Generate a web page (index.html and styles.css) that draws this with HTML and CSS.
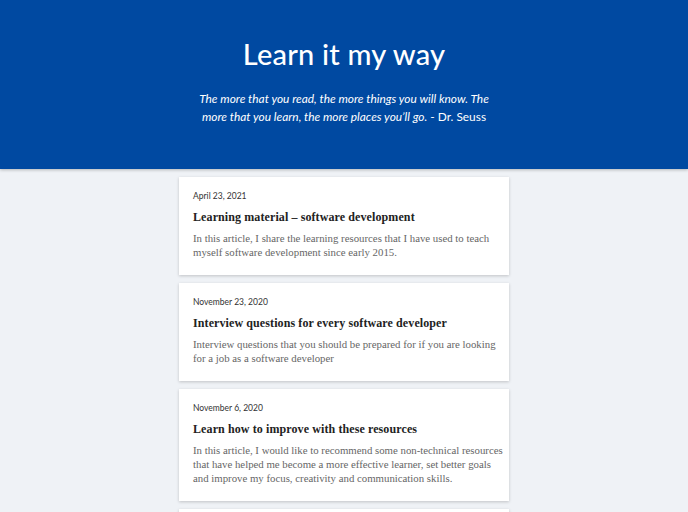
FILE: index.html
```html
<!DOCTYPE html>
<html lang="en">
<head>
<meta charset="utf-8">
<title>Learn it my way</title>
<link rel="stylesheet" href="styles.css">
</head>
<body>
<header class="hero">
  <h1 class="hero-title">Learn it my way</h1>
  <p class="hero-quote"><em>The more that you read, the more things you will know. The<br>more that you learn, the more places you’ll go.</em> - Dr.&nbsp;Seuss</p>
</header>
<main class="posts">
  <article class="card">
    <div class="card-date">April 23, 2021</div>
    <h2 class="card-title">Learning material – software development</h2>
    <p class="card-text">In this article, I share the learning resources that I have used to teach myself software development since early 2015.</p>
  </article>
  <article class="card">
    <div class="card-date">November 23, 2020</div>
    <h2 class="card-title">Interview questions for every software developer</h2>
    <p class="card-text">Interview questions that you should be prepared for if you are looking for a job as a software developer</p>
  </article>
  <article class="card">
    <div class="card-date">November 6, 2020</div>
    <h2 class="card-title">Learn how to improve with these resources</h2>
    <p class="card-text">In this article, I would like to recommend some non-technical resources that have helped me become a more effective learner, set better goals and improve my focus, creativity and communication skills.</p>
  </article>
  <article class="card">
    <div class="card-date">October 12, 2020</div>
    <h2 class="card-title">More articles</h2>
    <p class="card-text">More learning resources.</p>
  </article>
</main>
</body>
</html>
```
FILE: styles.css
```css
html, body {
  margin: 0;
  padding: 0;
}
body {
  background: #eff2f6;
  font-family: Lato, "Open Sans", sans-serif;
  color: #222;
}
.hero {
  background: #0049a1;
  color: #fff;
  height: 169px;
  box-sizing: border-box;
  padding-top: 33px;
  text-align: center;
  box-shadow: 0 1px 3px rgba(0, 0, 0, 0.25);
}
.hero-title {
  margin: 0;
  font-size: 29px;
  font-weight: 500;
  line-height: 42px;
  letter-spacing: 0.2px;
}
.hero-quote {
  margin: 15px auto 0;
  width: 360px;
  font-size: 11.9px;
  line-height: 18px;
}
.posts {
  width: 330px;
  margin: 0 auto;
  padding-top: 8px;
  display: flex;
  flex-direction: column;
  gap: 8px;
}
.card {
  background: #fff;
  padding: 14px 6px 15px 14px;
  box-shadow: 0 1px 3px rgba(0, 0, 0, 0.2);
}
.card-date {
  font-size: 8.5px;
  color: #333;
  line-height: 10px;
}
.card-title {
  margin: 8px 0 0;
  font-family: "Liberation Serif", "DejaVu Serif", serif;
  font-size: 12px;
  font-weight: bold;
  line-height: 16px;
  color: #222;
  letter-spacing: 0.1px;
}
.card-text {
  margin: 6px 0 0;
  font-family: "Liberation Serif", "DejaVu Serif", serif;
  font-size: 10.8px;
  line-height: 14.4px;
  color: #666;
}
```
